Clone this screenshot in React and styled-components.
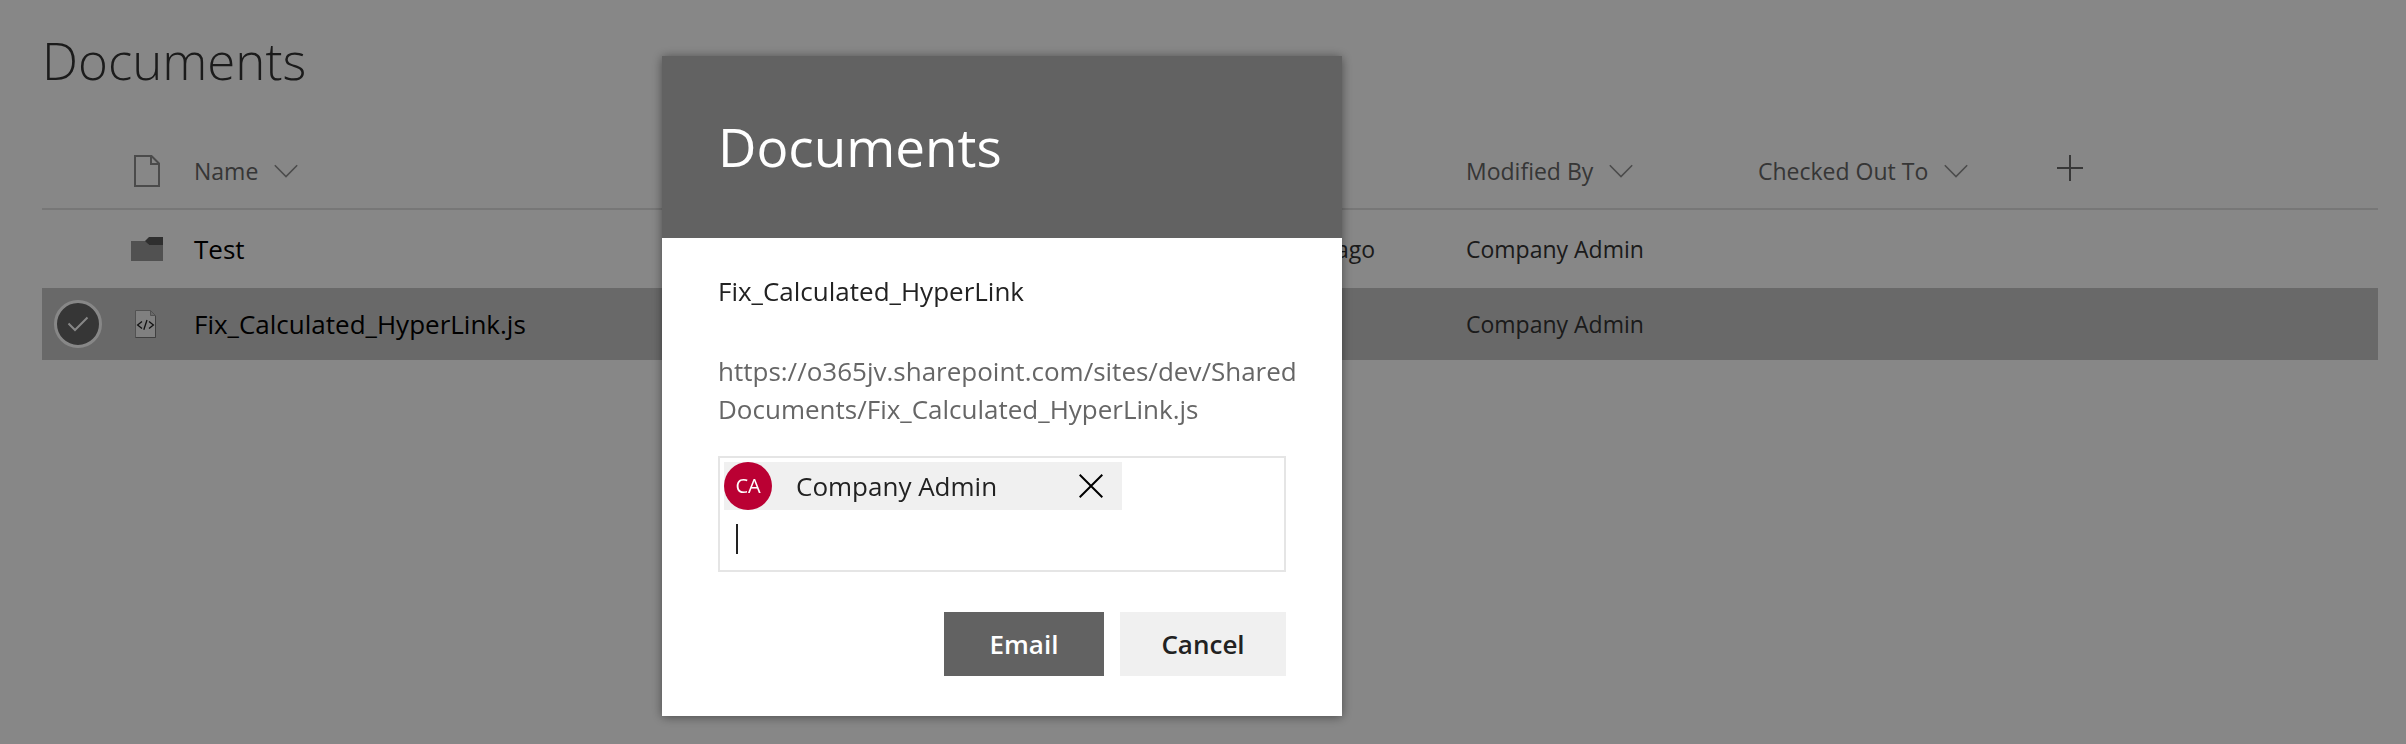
import React from "react";
import styled, { createGlobalStyle } from "styled-components";

const GlobalStyle = createGlobalStyle`
  *, *::before, *::after { box-sizing: border-box; }
  html, body, #root { min-height: 100vh; }
  body {
    margin: 0;
    background: #fff;
    color: #333;
    font-family: "Open Sans", "Noto Sans", sans-serif;
    font-size: 23px;
    line-height: 32px;
  }
  button, input { font: inherit; color: inherit; }
`;

const Page = styled.main`
  padding: 28px 28px 0 42px;
`;

const PageTitle = styled.h1`
  margin: 0;
  font-size: 51px;
  font-weight: 300;
  line-height: 64px;
`;

const FileTable = styled.table`
  width: 100%;
  margin-top: 42px;
  border-spacing: 0;
  table-layout: fixed;
  text-align: left;
`;

const Column = styled.col`
  width: ${(p) => p.$width || "auto"};
`;

const HeaderCell = styled.th`
  height: 76px;
  padding: 0 8px;
  border-bottom: 2px solid #e1e1e1;
  color: #666;
  font-weight: 400;
  text-align: left;
`;

const HeaderButton = styled.button`
  display: flex;
  align-items: center;
  gap: 16px;
  padding: 0;
  border: 0;
  background: none;
  white-space: nowrap;
`;

const AddButton = styled(HeaderButton)`
  padding: 0 0 6px 7px;
`;

const Row = styled.tr`
  height: ${(p) => (p.$selected ? "72px" : "78px")};
  background: ${(p) => (p.$selected ? "#c7c7c7" : "transparent")};
`;

const Cell = styled.td`
  padding: 0 8px;
`;

const CheckCell = styled(Cell)`
  padding: 0 0 0 12px;
`;

const TimeCell = styled(Cell)`
  padding-right: 83px;
  text-align: right;
`;

const FileLink = styled.a`
  color: #000;
  font-size: 26px;
  text-decoration: none;
`;

const Icon = styled.svg`
  display: block;
  flex: none;
`;

const CenteredIcon = styled(Icon)`
  margin: 0 auto;
`;

const CheckMark = styled.label`
  display: grid;
  place-items: center;
  width: 48px;
  height: 48px;
  border: 3px solid #fff;
  border-radius: 50%;
  background: #666;
  & > * { grid-area: 1 / 1; }
`;

const CheckInput = styled.input`
  appearance: none;
  width: 42px;
  height: 42px;
  margin: 0;
`;

const Overlay = styled.div`
  position: fixed;
  inset: 0;
  display: grid;
  grid-template-columns: 662fr 680px 1064fr;
  align-items: start;
  padding-top: 56px;
  overflow: auto;
  background: rgba(0, 0, 0, 0.47);
`;

const Dialog = styled.section`
  grid-column: 2;
  background: #fff;
  box-shadow: 0 1px 10px rgba(0, 0, 0, 0.45);
`;

const DialogHeader = styled.header`
  padding: 56px;
  background: #626262;
  color: #fff;
`;

const DialogTitle = styled.h2`
  margin: 0;
  font-size: 53px;
  font-weight: 400;
  line-height: 70px;
`;

const DialogBody = styled.form`
  padding: 34px 56px 40px;
  font-size: 26px;
  line-height: 38px;
  color: #222;
`;

const Subject = styled.p`
  margin: 0;
`;

const Address = styled.p`
  margin: 42px -40px 28px 0;
  color: #666;
`;

const PeoplePicker = styled.div`
  display: flex;
  flex-direction: column;
  height: 116px;
  padding: 4px;
  border: 2px solid #e5e5e5;
`;

const Persona = styled.div`
  display: flex;
  align-items: center;
  width: 398px;
  height: 48px;
  background: #f0f0f0;
`;

const Avatar = styled.span`
  display: grid;
  place-items: center;
  width: 48px;
  height: 48px;
  margin-right: 24px;
  border-radius: 50%;
  background: #ba0033;
  color: #fff;
  font-size: 20px;
`;

const RemoveButton = styled.button`
  display: flex;
  margin-left: auto;
  padding: 12px 19px;
  border: 0;
  background: none;
`;

const Entry = styled.div`
  display: flex;
  flex: none;
  align-items: center;
  height: 58px;
  padding-left: 12px;
`;

const Caret = styled.span`
  width: 2px;
  height: 30px;
  background: #222;
`;

const EntryInput = styled.input`
  flex: 1;
  min-width: 0;
  padding: 0;
  border: 0;
  outline: 0;
  background: none;
  caret-color: transparent;
`;

const Actions = styled.footer`
  display: flex;
  justify-content: flex-end;
  gap: 16px;
  margin-top: 40px;
`;

const ActionButton = styled.button`
  width: ${(p) => (p.$primary ? "160px" : "166px")};
  height: 64px;
  padding: 0;
  border: 0;
  background: ${(p) => (p.$primary ? "#626262" : "#f0f0f0")};
  color: ${(p) => (p.$primary ? "#fff" : "#222")};
  font-size: 26px;
  font-weight: 600;
`;

function Chevron() {
  return (
    <Icon width="24" height="14" viewBox="0 0 24 14" fill="none" stroke="#8f8f8f" strokeWidth="1.6" aria-hidden="true">
      <path d="M0.8 1.3 L12 12.5 L23.2 1.3" />
    </Icon>
  );
}

function DocumentIcon() {
  return (
    <CenteredIcon width="26" height="32" viewBox="0 0 26 32" fill="none" stroke="#8f8f8f" strokeWidth="2" aria-hidden="true">
      <path d="M1 1 H17.5 L25 8.5 V31 H1 Z M17 1 V9 H25" />
    </CenteredIcon>
  );
}

function FolderIcon() {
  return (
    <CenteredIcon width="32" height="24" viewBox="0 0 32 24" aria-hidden="true">
      <path d="M0 4 H15 L18 8 H32 V24 H0 Z" fill="#999" />
      <path d="M14 4 L18 0 H32 V8 H18 Z" fill="#5a5a5a" />
    </CenteredIcon>
  );
}

function ScriptIcon() {
  return (
    <CenteredIcon width="24" height="28" viewBox="0 0 24 28" aria-hidden="true">
      <path d="M0.5 0.5 H15.5 L20.5 5.5 V27.5 H0.5 Z" fill="#f2f2f2" stroke="#9c9c9c" />
      <path d="M0.5 27.5 H20.5 V6" fill="none" stroke="#7a7a7a" />
      <path d="M15.5 0.5 V5.5 H20.5 Z" fill="#c6c6c6" stroke="#9c9c9c" />
      <path d="M7 11.5 L2.6 15 L7 18.5 M14 11.5 L18.4 15 L14 18.5 M12 10 L8.8 19.8" fill="none" stroke="#222" strokeWidth="1.3" />
    </CenteredIcon>
  );
}

function CheckIcon() {
  return (
    <Icon width="22" height="16" viewBox="0 0 22 16" fill="none" stroke="#fff" strokeWidth="2" aria-hidden="true">
      <path d="M1.5 7.5 L8 14 L20.5 1.5" />
    </Icon>
  );
}

function SortHeader({ children }) {
  return (
    <HeaderCell scope="col">
      <HeaderButton type="button">
        {children}
        <Chevron />
      </HeaderButton>
    </HeaderCell>
  );
}

const files = [
  { name: "Test", icon: <FolderIcon />, time: "ago", author: "Company Admin" },
  { name: "Fix_Calculated_HyperLink.js", icon: <ScriptIcon />, author: "Company Admin", selected: true },
];

export default function App() {
  return (
    <>
      <GlobalStyle />
      <Page>
        <PageTitle>Documents</PageTitle>
        <FileTable>
          <colgroup>
            <Column $width="66px" />
            <Column $width="78px" />
            <Column />
            <Column $width="292px" />
            <Column $width="292px" />
            <Column $width="292px" />
            <Column $width="336px" />
          </colgroup>
          <thead>
            <tr>
              <HeaderCell />
              <HeaderCell scope="col"><DocumentIcon /></HeaderCell>
              <SortHeader>Name</SortHeader>
              <HeaderCell />
              <SortHeader>Modified By</SortHeader>
              <SortHeader>Checked Out To</SortHeader>
              <HeaderCell>
                <AddButton type="button" aria-label="Add column">
                  <Icon width="26" height="26" viewBox="0 0 26 26" stroke="#6b6b6b" strokeWidth="2" aria-hidden="true">
                    <path d="M0 13 H26 M13 0 V26" />
                  </Icon>
                </AddButton>
              </HeaderCell>
            </tr>
          </thead>
          <tbody>
            {files.map((file) => (
              <Row key={file.name} $selected={file.selected}>
                <CheckCell>
                  {file.selected && (
                    <CheckMark>
                      <CheckInput type="checkbox" defaultChecked aria-label={file.name} />
                      <CheckIcon />
                    </CheckMark>
                  )}
                </CheckCell>
                <Cell>{file.icon}</Cell>
                <Cell><FileLink href="#">{file.name}</FileLink></Cell>
                <TimeCell>{file.time}</TimeCell>
                <Cell>{file.author}</Cell>
                <Cell />
                <Cell />
              </Row>
            ))}
          </tbody>
        </FileTable>
      </Page>
      <Overlay>
        <Dialog role="dialog" aria-modal="true" aria-labelledby="dialog-title">
          <DialogHeader>
            <DialogTitle id="dialog-title">Documents</DialogTitle>
          </DialogHeader>
          <DialogBody onSubmit={(e) => e.preventDefault()}>
            <Subject>Fix_Calculated_HyperLink</Subject>
            <Address>https://o365jv.sharepoint.com/sites/dev/Shared Documents/Fix_Calculated_HyperLink.js</Address>
            <PeoplePicker>
              <Persona>
                <Avatar>CA</Avatar>
                <span>Company Admin</span>
                <RemoveButton type="button" aria-label="Remove Company Admin">
                  <Icon width="24" height="24" viewBox="0 0 24 24" stroke="#000" strokeWidth="2" aria-hidden="true">
                    <path d="M0.7 0.7 L23.3 23.3 M23.3 0.7 L0.7 23.3" />
                  </Icon>
                </RemoveButton>
              </Persona>
              <Entry>
                <Caret />
                <EntryInput type="text" aria-label="Recipients" />
              </Entry>
            </PeoplePicker>
            <Actions>
              <ActionButton type="submit" $primary>Email</ActionButton>
              <ActionButton type="button">Cancel</ActionButton>
            </Actions>
          </DialogBody>
        </Dialog>
      </Overlay>
    </>
  );
}
